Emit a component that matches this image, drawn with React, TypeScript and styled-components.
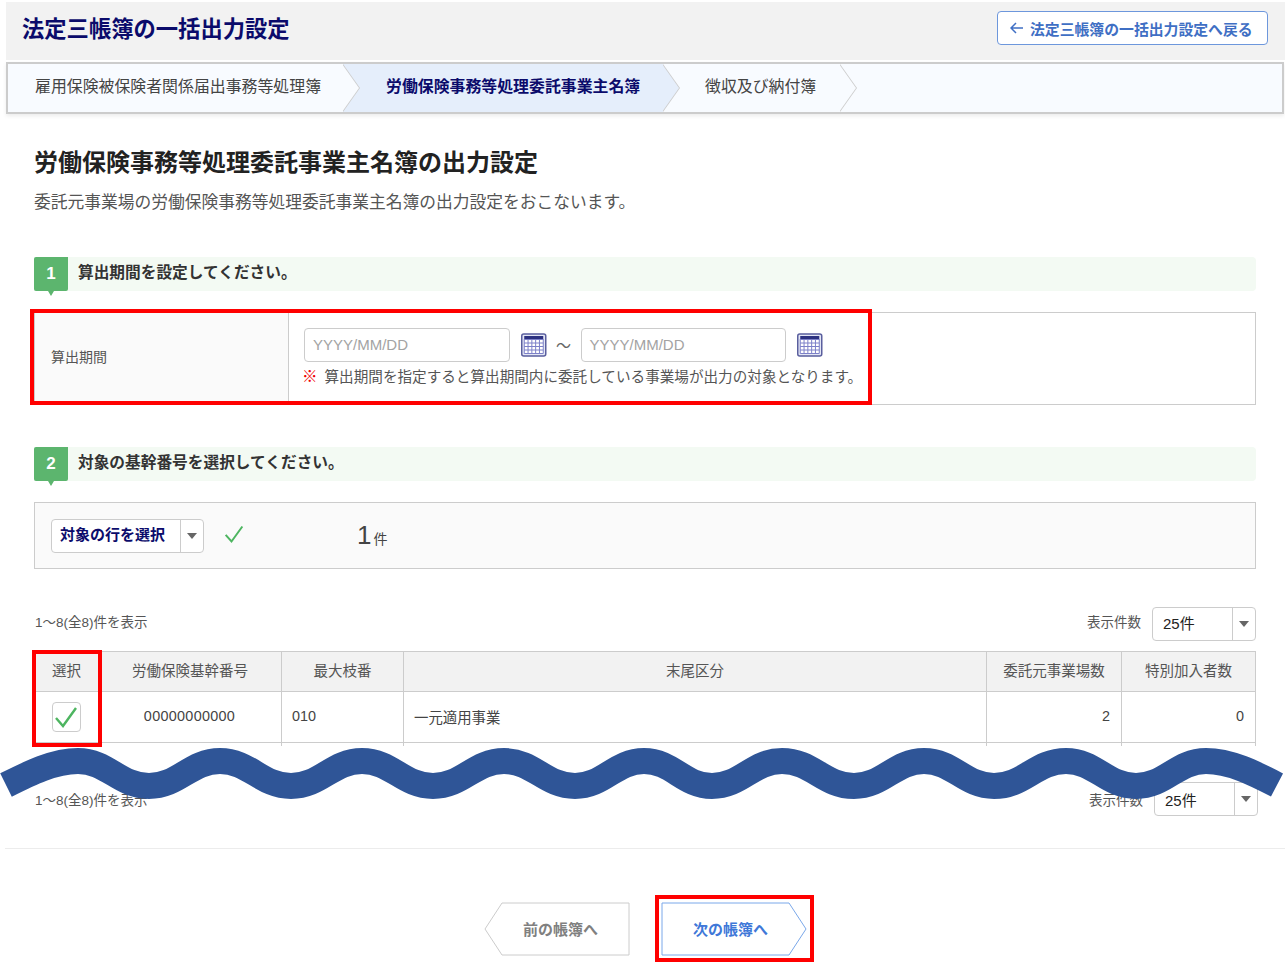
import { FC } from 'react';
import styled, { createGlobalStyle } from 'styled-components';

const GlobalStyle = createGlobalStyle`
    html, body {
        margin: 0;
        padding: 0;
        background: #fff;
    }
    body {
        font-family: "Liberation Sans", "Noto Sans CJK JP", sans-serif;
        color: #444;
    }
`;

const Page = styled.div`
    position: relative;
    width: 1285px;
    height: 966px;
    overflow: hidden;
    padding-top: 2px;
    box-sizing: border-box;
`;
const Header = styled.header`
    display: flex;
    align-items: center;
    justify-content: space-between;
    height: 58px;
    margin-left: 6px;
    padding: 0 17px 6px 16px;
    box-sizing: border-box;
    background: #f2f2f2;
`;
const HeaderTitle = styled.h1`
    margin: 4px 0 0;
    font-size: 22.3px;
    line-height: 1;
    font-weight: 700;
    color: #0b0b6b;
`;
const BackButton = styled.a`
    display: flex;
    align-items: center;
    gap: 7px;
    width: 271px;
    height: 34px;
    padding-left: 12px;
    box-sizing: border-box;
    background: #fff;
    border: 1px solid #6d97dc;
    border-radius: 4px;
    font-size: 14.85px;
    font-weight: 700;
    color: #3f6fc4;
`;
const Tabs = styled.nav`
    display: flex;
    height: 52px;
    margin: 2px 1px 0 6px;
    box-sizing: border-box;
    border: 2px solid #cccccc;
    background: #f8fbff;
    box-shadow: 0 2px 4px rgba(0, 0, 0, 0.08);
`;
const Tab = styled.div<{ $active?: boolean; $width: number; $pad: number }>`
    position: relative;
    display: flex;
    align-items: center;
    width: ${(p) => p.$width}px;
    padding: 0 0 6px ${(p) => p.$pad}px;
    box-sizing: border-box;
    font-size: 15.9px;
    font-weight: ${(p) => (p.$active ? 700 : 400)};
    color: ${(p) => (p.$active ? '#0b0b6b' : '#444')};
    background: ${(p) => (p.$active ? '#e5eefb' : 'transparent')};

    &::after,
    &::before {
        content: '';
        position: absolute;
        top: 0;
        bottom: 0;
        width: 17px;
        clip-path: polygon(0 0, 100% 50%, 0 100%);
    }
    &::after {
        left: 100%;
        background: #cccccc;
        z-index: 1;
    }
    &::before {
        left: calc(100% - 1px);
        background: ${(p) => (p.$active ? '#e5eefb' : '#f8fbff')};
        z-index: 2;
    }
`;
const Main = styled.main`
    padding: 0 29px 0 34px;
`;
const PageTitle = styled.h2`
    margin: 34px 0 0;
    font-size: 24px;
    line-height: 30px;
    font-weight: 700;
    color: #222;
`;
const Description = styled.p`
    margin: 14px 0 0;
    font-size: 16.75px;
    line-height: 22px;
    color: #555;
`;
const StepBar = styled.div<{ $top: number }>`
    display: flex;
    align-items: center;
    gap: 10px;
    height: 34px;
    margin-top: ${(p) => p.$top}px;
    background: #f3faf3;
    border-radius: 0 4px 4px 0;
    font-size: 15.7px;
    font-weight: 700;
    color: #333;
`;
const StepText = styled.span`
    padding-bottom: 6px;
`;
const StepNumber = styled.span`
    position: relative;
    display: flex;
    align-items: center;
    justify-content: center;
    width: 34px;
    height: 34px;
    background: #5cb56e;
    border-radius: 2px 0 2px 2px;
    font-size: 17px;
    font-weight: 700;
    color: #fff;

    &::after {
        content: '';
        position: absolute;
        top: 100%;
        left: 14px;
        border: 3px solid transparent;
        border-top: 5px solid #5cb56e;
        border-bottom: 0;
    }
`;
const FormTable = styled.div`
    position: relative;
    display: flex;
    height: 93px;
    margin-top: 21px;
    box-sizing: border-box;
    border: 1px solid #cccccc;
`;
const FormLabel = styled.div`
    display: flex;
    align-items: center;
    width: 254px;
    padding: 0 0 6px 16px;
    box-sizing: border-box;
    background: #fafafa;
    border-right: 1px solid #cccccc;
    font-size: 14px;
    color: #555;
`;
const FormBody = styled.div`
    display: flex;
    flex-direction: column;
    gap: 5px;
    padding: 15px 0 0 15px;
`;
const DateRow = styled.div`
    display: flex;
    align-items: center;
`;
const DateInput = styled.div`
    display: flex;
    align-items: center;
    width: 205.5px;
    height: 34px;
    padding: 0 0 1px 8px;
    box-sizing: border-box;
    background: #fff;
    border: 1px solid #cccccc;
    border-radius: 4px;
    font-size: 15px;
    color: #a3a3a3;
`;
const CalendarButton = styled.span`
    display: flex;
    margin-left: 11px;
`;
const Tilde = styled.span`
    width: 34px;
    padding-bottom: 2px;
    text-align: center;
    font-size: 15px;
    color: #666;
`;
const Note = styled.div`
    display: flex;
    align-items: center;
    gap: 7px;
    font-size: 14.6px;
    line-height: 20px;
    color: #555;
`;
const NoteMark = styled.span`
    margin-left: -2px;
    font-size: 15.5px;
    color: #f00000;
    font-weight: 900;
`;
const Highlight = styled.div<{ $t: number; $r: number; $b: number; $l: number }>`
    position: absolute;
    top: ${(p) => p.$t}px;
    right: ${(p) => p.$r}px;
    bottom: ${(p) => p.$b}px;
    left: ${(p) => p.$l}px;
    border: 4px solid #ff0000;
    pointer-events: none;
    z-index: 3;
`;
const SelectPanel = styled.div`
    display: flex;
    align-items: center;
    height: 67px;
    margin-top: 21px;
    padding-left: 16px;
    box-sizing: border-box;
    background: #fafafa;
    border: 1px solid #cccccc;
`;
const Dropdown = styled.div<{ $width: number }>`
    display: flex;
    width: ${(p) => p.$width}px;
    height: 34px;
    box-sizing: border-box;
    background: #fff;
    border: 1px solid #cccccc;
    border-radius: 4px;
`;
const DropdownValue = styled.div<{ $strong?: boolean; $lift?: number }>`
    flex: 1;
    display: flex;
    align-items: center;
    padding: 0 0 ${(p) => p.$lift ?? 0}px ${(p) => (p.$strong ? 8 : 10)}px;
    font-size: 15px;
    font-weight: ${(p) => (p.$strong ? 700 : 400)};
    color: ${(p) => (p.$strong ? '#0b0b6b' : '#222')};
`;
const DropdownArrow = styled.div`
    display: flex;
    align-items: center;
    justify-content: center;
    width: 22px;
    border-left: 1px solid #cccccc;

    &::after {
        content: '';
        border: 5px solid transparent;
        border-top: 6px solid #666;
        border-bottom: 0;
    }
`;
const PanelCheck = styled.span`
    display: flex;
    margin: 0 0 3px 20px;
`;
const Count = styled.span`
    display: flex;
    align-items: baseline;
    gap: 2px;
    margin-left: 113px;
    font-size: 26px;
    color: #444;
`;
const CountUnit = styled.span`
    font-size: 14px;
`;
const Pager = styled.div<{ $top: number; $shift?: number }>`
    display: flex;
    align-items: center;
    justify-content: space-between;
    height: 34px;
    margin-top: ${(p) => p.$top}px;
    margin-right: ${(p) => -(p.$shift ?? 0)}px;
    padding-left: 1px;
    font-size: 13.5px;
    color: #555;
`;
const PagerText = styled.span<{ $lift?: number }>`
    padding-bottom: ${(p) => p.$lift ?? 0}px;
`;
const PageSize = styled.div`
    display: flex;
    align-items: center;
    gap: 11px;
`;
const TableWrap = styled.div`
    position: relative;
    margin-top: 10px;
`;
const Table = styled.div`
    display: grid;
    grid-template-columns: 67px 180px 122px 583px 135px 134px;
    grid-template-rows: 40px 52px 3px;
    border-right: 1px solid #cccccc;
`;
const HeadCell = styled.div<{ $nudge?: boolean }>`
    display: flex;
    align-items: center;
    justify-content: center;
    padding: 0 ${(p) => (p.$nudge ? 3 : 0)}px 4px 0;
    background: #f2f2f2;
    border-top: 1px solid #cccccc;
    border-left: 1px solid #cccccc;
    font-size: 14.5px;
    color: #555;
`;
const BodyCell = styled.div<{ $align?: 'left' | 'center' | 'right' }>`
    display: flex;
    align-items: center;
    justify-content: ${(p) => (p.$align === 'right' ? 'flex-end' : p.$align === 'center' ? 'center' : 'flex-start')};
    padding: 0 11px 2px 10px;
    border-top: 1px solid #cccccc;
    border-bottom: 1px solid #cccccc;
    border-left: 1px solid #cccccc;
    font-size: 14.4px;
    color: #444;
`;
const CheckCell = styled(BodyCell)`
    padding: 0 4px 0 0;
`;
const NumberCell = styled(BodyCell)`
    padding-right: 15px;
    padding-left: 11px;
    letter-spacing: 0.3px;
`;
const StubCell = styled.div`
    border-left: 1px solid #cccccc;
`;
const Checkbox = styled.span`
    display: flex;
    align-items: center;
    justify-content: center;
    width: 29px;
    height: 30px;
    box-sizing: border-box;
    background: #fff;
    border: 1px solid #cccccc;
    border-radius: 4px;
`;
const Wave = styled.svg`
    position: absolute;
    top: 0;
    left: 0;
    z-index: 4;
    pointer-events: none;
`;
const Divider = styled.hr`
    height: 1px;
    margin: 32px 0 0 5px;
    border: 0;
    background: #ececec;
`;
const Footer = styled.div`
    display: flex;
    justify-content: center;
    gap: 31px;
    margin: 53px 0 0 6px;
`;
const StepButton = styled.div`
    position: relative;
`;
const StepButtonLabel = styled.span<{ $next?: boolean }>`
    position: absolute;
    inset: 0;
    display: flex;
    align-items: center;
    justify-content: center;
    padding: 0 ${(p) => (p.$next ? 7 : 0)}px 2px ${(p) => (p.$next ? 0 : 7)}px;
    font-size: 15px;
    font-weight: 700;
    color: ${(p) => (p.$next ? '#3f78d8' : '#808080')};
`;
const NextHighlight = styled.div`
    position: absolute;
    top: -7px;
    left: -6px;
    width: 159px;
    height: 67px;
    box-sizing: border-box;
    border: 4px solid #ff0000;
    pointer-events: none;
`;
const StepButtonShape = styled.svg`
    display: block;
`;

const CalendarIcon: FC = () => (
    <svg width="26" height="24" viewBox="1 0 26 24">
        <rect x="1.75" y="1" width="24" height="22" rx="2" fill="#e3e6f5" stroke="#5a5f9e" strokeWidth="1.5" />
        <rect x="4.25" y="3" width="19" height="3" fill="#2c3180" />
        <rect x="4.25" y="6" width="19" height="14.5" fill="#fff" />
        {[4.25, 8.05, 11.85, 15.65, 19.45, 23.25].map((x) => (
            <line key={x} x1={x} y1="6" x2={x} y2="20.5" stroke="#7c80c8" strokeWidth="1" />
        ))}
        {[6.5, 10, 13.5, 17, 20.5].map((y) => (
            <line key={y} x1="4.25" y1={y} x2="23.25" y2={y} stroke="#7c80c8" strokeWidth="1" />
        ))}
    </svg>
);

const CheckMark: FC<{ size: number }> = ({ size }) => (
    <svg width={size} height={size} viewBox="0 0 24 24" fill="none">
        <path d="M2 13 L9 21 L22 3" stroke="#4db560" strokeWidth="2.4" />
    </svg>
);

const BackArrow: FC = () => (
    <svg width="13" height="12" viewBox="0 0 13 12" fill="none">
        <path d="M6 1 L1 6 L6 11 M1 6 H13" stroke="#3f6fc4" strokeWidth="1.5" />
    </svg>
);

// 波線の中心線: 山と谷を交互につなぐ
const crests = [78, 149, 220, 291, 362, 433, 504, 575, 644, 712, 782, 854, 924, 994, 1066, 1136, 1206];
const wavePath = () => {
    const y = (i: number) => (i % 2 === 0 ? 761 : 786);
    let d = 'M6 785 C 30 773 54 761 78 761';
    crests.slice(1).forEach((x, i) => {
        const prev = crests[i];
        const mid = (x - prev) * 0.42;
        d += ` C ${prev + mid} ${y(i)} ${x - mid} ${y(i + 1)} ${x} ${y(i + 1)}`;
    });
    d += ' C 1230 761 1254 773 1277 785';
    return d;
};

const App: FC = () => {
    return (
        <>
            <GlobalStyle />
            <Page>
                <Header>
                    <HeaderTitle>法定三帳簿の一括出力設定</HeaderTitle>
                    <BackButton>
                        <BackArrow />
                        法定三帳簿の一括出力設定へ戻る
                    </BackButton>
                </Header>
                <Tabs>
                    <Tab $width={335} $pad={27}>雇用保険被保険者関係届出事務等処理簿</Tab>
                    <Tab $width={320} $pad={43} $active>労働保険事務等処理委託事業主名簿</Tab>
                    <Tab $width={177} $pad={42}>徴収及び納付簿</Tab>
                </Tabs>
                <Main>
                    <PageTitle>労働保険事務等処理委託事業主名簿の出力設定</PageTitle>
                    <Description>委託元事業場の労働保険事務等処理委託事業主名簿の出力設定をおこないます。</Description>

                    <StepBar $top={43}>
                        <StepNumber>1</StepNumber>
                        <StepText>算出期間を設定してください。</StepText>
                    </StepBar>
                    <FormTable>
                        <FormLabel>算出期間</FormLabel>
                        <FormBody>
                            <DateRow>
                                <DateInput>YYYY/MM/DD</DateInput>
                                <CalendarButton><CalendarIcon /></CalendarButton>
                                <Tilde>〜</Tilde>
                                <DateInput>YYYY/MM/DD</DateInput>
                                <CalendarButton><CalendarIcon /></CalendarButton>
                            </DateRow>
                            <Note>
                                <NoteMark>※</NoteMark>
                                算出期間を指定すると算出期間内に委託している事業場が出力の対象となります。
                            </Note>
                        </FormBody>
                        <Highlight $t={-4} $r={383} $b={-1} $l={-5} />
                    </FormTable>

                    <StepBar $top={42}>
                        <StepNumber>2</StepNumber>
                        <StepText>対象の基幹番号を選択してください。</StepText>
                    </StepBar>
                    <SelectPanel>
                        <Dropdown $width={153}>
                            <DropdownValue $strong $lift={4}>対象の行を選択</DropdownValue>
                            <DropdownArrow />
                        </Dropdown>
                        <PanelCheck><CheckMark size={20} /></PanelCheck>
                        <Count>1<CountUnit>件</CountUnit></Count>
                    </SelectPanel>

                    <Pager $top={38}>
                        <PagerText $lift={6}>1〜8(全8)件を表示</PagerText>
                        <PageSize>
                            <PagerText $lift={6}>表示件数</PagerText>
                            <Dropdown $width={104}>
                                <DropdownValue $lift={4}>25件</DropdownValue>
                                <DropdownArrow />
                            </Dropdown>
                        </PageSize>
                    </Pager>

                    <TableWrap>
                        <Table>
                            <HeadCell $nudge>選択</HeadCell>
                            <HeadCell $nudge>労働保険基幹番号</HeadCell>
                            <HeadCell>最大枝番</HeadCell>
                            <HeadCell>末尾区分</HeadCell>
                            <HeadCell>委託元事業場数</HeadCell>
                            <HeadCell>特別加入者数</HeadCell>
                            <CheckCell $align="center">
                                <Checkbox><CheckMark size={24} /></Checkbox>
                            </CheckCell>
                            <NumberCell $align="center">00000000000</NumberCell>
                            <BodyCell>010</BodyCell>
                            <BodyCell>一元適用事業</BodyCell>
                            <BodyCell $align="right">2</BodyCell>
                            <BodyCell $align="right">0</BodyCell>
                            <StubCell />
                            <StubCell />
                            <StubCell />
                            <StubCell />
                            <StubCell />
                            <StubCell />
                        </Table>
                        <Highlight $t={-1} $r={1154} $b={-1} $l={-2} />
                    </TableWrap>

                    <Pager $top={36} $shift={2}>
                        <PagerText>1〜8(全8)件を表示</PagerText>
                        <PageSize>
                            <PagerText>表示件数</PagerText>
                            <Dropdown $width={104}>
                                <DropdownValue>25件</DropdownValue>
                                <DropdownArrow />
                            </Dropdown>
                        </PageSize>
                    </Pager>
                </Main>
                <Divider />
                <Footer>
                    <StepButton>
                        <StepButtonShape width="146" height="54" viewBox="0 0 146 54">
                            <path d="M145 1 H18 L1 27 L18 53 H145 Z" fill="#fff" stroke="#cccccc" strokeWidth="1" />
                        </StepButtonShape>
                        <StepButtonLabel>前の帳簿へ</StepButtonLabel>
                    </StepButton>
                    <StepButton>
                        <StepButtonShape width="146" height="54" viewBox="0 0 146 54">
                            <path d="M1 1 H128 L145 27 L128 53 H1 Z" fill="#fff" stroke="#7aa8ea" strokeWidth="1" />
                        </StepButtonShape>
                        <StepButtonLabel $next>次の帳簿へ</StepButtonLabel>
                        <NextHighlight />
                    </StepButton>
                </Footer>
                <Wave width="1285" height="966" viewBox="0 0 1285 966">
                    <path d={wavePath()} fill="none" stroke="#2f5597" strokeWidth="26" />
                </Wave>
            </Page>
        </>
    );
};

export default App;
